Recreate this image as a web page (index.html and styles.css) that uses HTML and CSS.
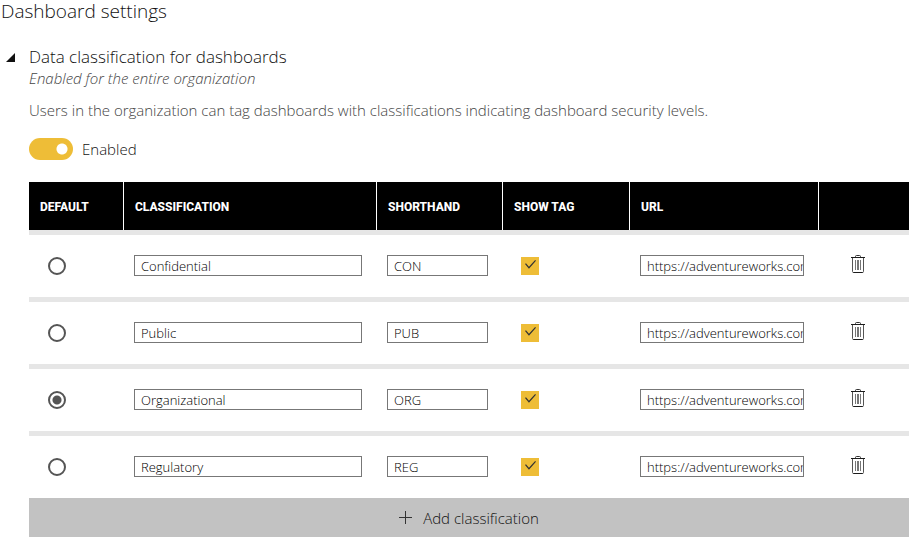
FILE: index.html
```html
<!DOCTYPE html>
<html lang="en">
<head>
<meta charset="utf-8">
<title>Dashboard settings</title>
<link rel="stylesheet" href="styles.css">
</head>
<body>
<svg class="sprite" aria-hidden="true">
  <symbol id="trash" viewBox="0 0 14 19">
    <path d="M0 2.5H14M2 17.5H12" stroke="#1c1c1c" fill="none"/>
    <path d="M4.500 2V1.500Q4.500 .5 5.500 .5H8.500Q9.500 .5 9.500 1.500V2" stroke="#333" fill="none"/>
    <path d="M1.500 3V16.500Q1.500 17.500 2.500 17.500M12.500 3V16.500Q12.500 17.500 11.500 17.500" stroke="#555" fill="none"/>
    <path d="M4.500 5V15M6.500 5V15M7.500 5V15M9.500 5V15" stroke="#777" fill="none"/>
  </symbol>
</svg>
<main class="page">
  <h1 class="page-title">Dashboard settings</h1>
  <section class="setting">
    <button class="collapse" type="button" aria-label="Collapse setting" aria-expanded="true">
      <svg width="9" height="9" viewBox="0 0 9 9"><path d="M9 0V9H0Z" fill="#111"/></svg>
    </button>
    <div class="setting-body">
      <h2 class="setting-title">Data classification for dashboards</h2>
      <p class="scope">Enabled for the entire organization</p>
      <p class="description">Users in the organization can tag dashboards with classifications indicating dashboard security levels.</p>
      <label class="toggle"><input class="switch" type="checkbox" role="switch" checked>Enabled</label>
      <table class="levels">
        <colgroup><col class="c-default"><col class="c-name"><col class="c-short"><col class="c-tag"><col class="c-url"><col class="c-delete"></colgroup>
        <thead>
          <tr><th>DEFAULT</th><th>CLASSIFICATION</th><th>SHORTHAND</th><th>SHOW TAG</th><th>URL</th><td></td></tr>
        </thead>
        <tbody>
          <tr>
            <td class="choice"><input class="radio" type="radio" name="default" aria-label="Default: Confidential"></td>
            <td><input class="field" type="text" value="Confidential" aria-label="Classification"></td>
            <td><input class="field" type="text" value="CON" aria-label="Shorthand"></td>
            <td class="choice"><input class="check" type="checkbox" checked aria-label="Show tag"></td>
            <td><input class="field" type="text" value="https://adventureworks.com" aria-label="URL"></td>
            <td class="remove"><button class="delete" type="button" aria-label="Delete Confidential"><svg width="14" height="19"><use href="#trash"/></svg></button></td>
          </tr>
          <tr>
            <td class="choice"><input class="radio" type="radio" name="default" aria-label="Default: Public"></td>
            <td><input class="field" type="text" value="Public" aria-label="Classification"></td>
            <td><input class="field" type="text" value="PUB" aria-label="Shorthand"></td>
            <td class="choice"><input class="check" type="checkbox" checked aria-label="Show tag"></td>
            <td><input class="field" type="text" value="https://adventureworks.com" aria-label="URL"></td>
            <td class="remove"><button class="delete" type="button" aria-label="Delete Public"><svg width="14" height="19"><use href="#trash"/></svg></button></td>
          </tr>
          <tr>
            <td class="choice"><input class="radio" type="radio" name="default" checked aria-label="Default: Organizational"></td>
            <td><input class="field" type="text" value="Organizational" aria-label="Classification"></td>
            <td><input class="field" type="text" value="ORG" aria-label="Shorthand"></td>
            <td class="choice"><input class="check" type="checkbox" checked aria-label="Show tag"></td>
            <td><input class="field" type="text" value="https://adventureworks.com" aria-label="URL"></td>
            <td class="remove"><button class="delete" type="button" aria-label="Delete Organizational"><svg width="14" height="19"><use href="#trash"/></svg></button></td>
          </tr>
          <tr>
            <td class="choice"><input class="radio" type="radio" name="default" aria-label="Default: Regulatory"></td>
            <td><input class="field" type="text" value="Regulatory" aria-label="Classification"></td>
            <td><input class="field" type="text" value="REG" aria-label="Shorthand"></td>
            <td class="choice"><input class="check" type="checkbox" checked aria-label="Show tag"></td>
            <td><input class="field" type="text" value="https://adventureworks.com" aria-label="URL"></td>
            <td class="remove"><button class="delete" type="button" aria-label="Delete Regulatory"><svg width="14" height="19"><use href="#trash"/></svg></button></td>
          </tr>
        </tbody>
      </table>
      <button class="add" type="button">
        <svg width="13" height="13" viewBox="0 0 13 13"><path d="M0 6.500H13M6.500 0V13" stroke="#333" fill="none"/></svg>
        Add classification
      </button>
    </div>
  </section>
</main>
</body>
</html>
```
FILE: styles.css
```css
* { box-sizing: border-box; }

body {
  margin: 0;
  background: #fff;
  color: #111;
  font-family: "Open Sans", "Noto Sans", sans-serif;
  font-size: 15px;
  font-weight: 300;
}

h1, h2, p { margin: 0; }

button {
  padding: 0;
  border: 0;
  background: none;
  color: inherit;
  font: inherit;
}

svg { display: block; }

.sprite {
  position: absolute;
  width: 0;
  height: 0;
}

.page { padding: 0 6px 7px 0; }

.page-title {
  padding-left: 1px;
  font-size: 19px;
  font-weight: 300;
  line-height: 22px;
}

.setting {
  display: flex;
  gap: 14px;
  margin-top: 24px;
  padding-left: 6px;
}

.collapse {
  flex: none;
  align-self: flex-start;
  margin-top: 7px;
}

.setting-body {
  flex: 1;
  min-width: 0;
}

.setting-title {
  font-size: 17px;
  font-weight: 300;
  line-height: 22px;
}

.scope {
  color: #444;
  font-style: italic;
  line-height: 20px;
}

.description {
  margin-top: 12px;
  color: #444;
  line-height: 20px;
}

.toggle {
  display: flex;
  align-items: center;
  gap: 9px;
  margin-top: 18px;
  line-height: 22px;
}

.switch {
  appearance: none;
  width: 44px;
  height: 22px;
  margin: 0;
  border-radius: 11px;
  background: #999;
}

.switch:checked { background: radial-gradient(circle at 33px 11px, #fff 5px, #eebd37 6px); }

.levels {
  width: 100%;
  margin-top: 22px;
  border-collapse: separate;
  border-spacing: 0;
  table-layout: fixed;
}

.c-default { width: 95px; }
.c-short { width: 126px; }
.c-tag { width: 127px; }
.c-url { width: 189px; }
.c-delete { width: 90px; }

.levels thead th,
.levels thead td {
  height: 48px;
  padding: 2px 11px 0;
  border-right: 1px solid #fff;
  background: #000;
  color: #fff;
  font-family: Roboto, sans-serif;
  font-size: 12px;
  font-weight: 800;
  text-align: left;
}

.levels thead td { border-right: 0; }

.levels tbody td {
  height: 67px;
  padding: 0 15px 0 10px;
  border-top: 5px solid #e6e6e6;
  vertical-align: middle;
}

.levels tbody td:not(.choice) { padding-bottom: 1px; }
.levels tbody .choice { padding-left: 18px; }
.levels tbody td.remove { padding: 0 0 4px 32px; }

.delete { display: block; }

.field {
  display: block;
  width: 100%;
  height: 21px;
  padding: 1px 0 0 6px;
  border: 1px solid #777;
  border-radius: 0;
  background: #fff;
  color: #000;
  font-family: inherit;
  font-size: 13px;
  font-weight: 300;
}

.radio,
.check {
  appearance: none;
  display: block;
  width: 18px;
  height: 18px;
  margin: 0;
}

.radio {
  margin-left: 1px;
  border: 2px solid #555;
  border-radius: 50%;
}

.radio:checked { background: radial-gradient(circle, #555 4px, #fff 5px); }

.check {
  padding: 3px 4px;
  background: #eebd37;
}

.check::before {
  content: "";
  display: block;
  width: 11px;
  height: 9px;
  background: #333;
  clip-path: polygon(0 45%, 9% 36%, 36% 75%, 92% 0, 100% 9%, 36% 96%);
}

.add {
  display: flex;
  align-items: center;
  justify-content: center;
  gap: 11px;
  width: 100%;
  height: 39px;
  background: #c2c2c2;
}
```
